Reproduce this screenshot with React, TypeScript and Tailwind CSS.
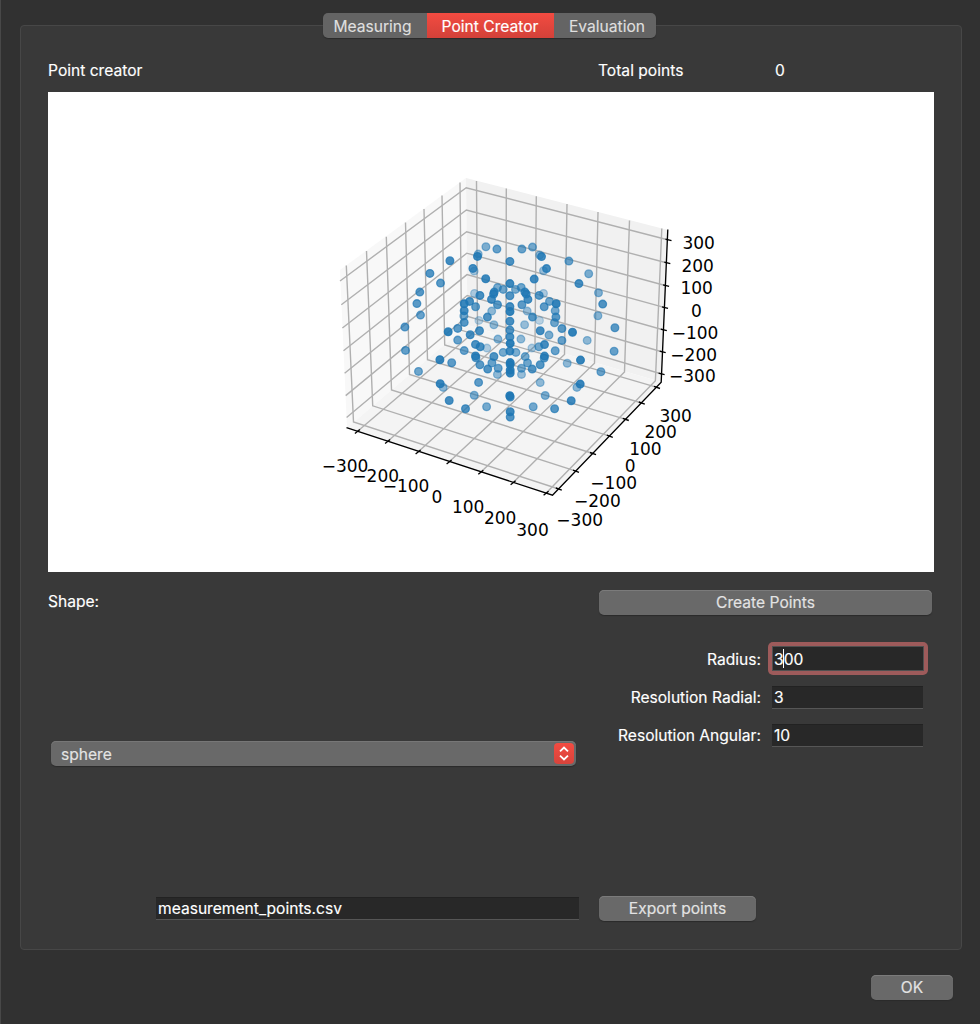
import React from "react";

type P = [number, number];

const leftTop: P[] = [[346.3, 265.5], [366.5, 251], [386.3, 236.7], [405.5, 222.5], [424, 209], [442, 195.5], [460, 182.5]];
const leftBottom: P[] = [[353.5, 422], [372.7, 405.8], [391.5, 390], [409.5, 374.5], [427.5, 359.7], [444.7, 345], [461.5, 330.3]];
const yTicks: P[] = [[558.8, 489], [576, 471.2], [593, 453.5], [609.8, 436.2], [625.8, 419.3], [641.8, 403], [657, 387.3]];
const backTop: P[] = [[476.5, 181], [506.3, 188.5], [536.3, 196.3], [567, 204], [598, 212], [629.5, 220.5], [661.8, 228.5]];
const backBottom: P[] = [[477.5, 329.3], [506, 337.7], [535, 346], [564.5, 354.5], [594.5, 363.2], [624.5, 372], [655.4, 380.8]];
const xTicks: P[] = [[357.3, 431.5], [387.5, 441.5], [418, 452], [449, 462], [480.7, 472.3], [513, 482.7], [546, 493.3]];
const zLeft: P[] = [[340, 281], [341.3, 304.7], [342.4, 328], [343.5, 350.8], [344.6, 373.2], [345.7, 395.6], [346.6, 417.5]];
const zCorner: P[] = [[466.2, 187.7], [466.4, 210], [466.6, 231.7], [466.8, 253.2], [467, 274.6], [467.2, 295.5], [467.4, 316.3]];
const zTicks: P[] = [[668.5, 240], [667.3, 263], [666.1, 285.7], [665, 307.7], [663.8, 330], [662.7, 352], [661.6, 374]];

const labels: [string, number, number][] = [
  ["−300", 345.3, 465.7], ["−200", 376, 476], ["−100", 406.3, 486.2], ["0", 437.3, 496.7], ["100", 468.5, 507], ["200", 500.5, 518.3], ["300", 532.8, 529.5],
  ["−300", 580, 519.7], ["−200", 597.7, 501.3], ["−100", 614, 483.3], ["0", 630.5, 466], ["100", 645.7, 449], ["200", 661, 432.3], ["300", 676, 416.3],
  ["300", 699, 243], ["200", 698, 266.3], ["100", 697, 288.3], ["0", 696.7, 310.7], ["−100", 695.3, 333], ["−200", 694, 354.7], ["−300", 692.7, 376],
];

const dots: [number, number, number][] = [
  [485.7, 246.7, 0.58], [496.7, 249, 0.7], [478, 254, 0.5], [477.3, 256.3, 0.9], [449.7, 260.7, 0.88], [474, 271, 0.4], [472.7, 268.3, 0.85],
  [429.7, 273.3, 0.8], [440.3, 283, 0.76], [485.5, 278.7, 0.9], [419.6, 292, 0.78], [416.7, 303.5, 0.76], [420.3, 315, 0.7], [404.7, 327, 0.74],
  [405.3, 350.3, 0.72], [448, 331.7, 0.95],
  [521.7, 249, 0.68], [532.3, 247, 0.62], [539.5, 255, 0.5], [541.3, 256.5, 0.85], [509.7, 261.3, 0.82], [568.7, 261, 0.68], [543.3, 270.7, 0.45],
  [546.3, 268.5, 0.85], [588.5, 273.7, 0.6], [534, 279, 0.88], [578.7, 283.5, 0.85], [598.3, 292.7, 0.56], [602.5, 304, 0.8], [597.7, 315.7, 0.54],
  [614.7, 327.7, 0.76], [613.9, 351.2, 0.7], [572.3, 332.2, 0.95], [587, 340.3, 0.5],
  [509.7, 283.5, 0.9], [509.7, 295.6, 0.8], [509.7, 306.5, 0.85], [509.8, 311.5, 0.95], [509.7, 321.2, 0.85], [509.7, 330, 0.8], [509.7, 336.8, 0.85],
  [510, 343.3, 0.97], [509.7, 351, 0.88], [510, 362.5, 0.95], [510, 364.5, 0.9], [510, 370, 0.95], [510, 373, 0.95], [509.6, 395.6, 0.95], [510, 397, 0.8],
  [510, 411.7, 0.9], [510, 417, 0.8],
  [474.3, 293.3, 0.35], [479.7, 295.3, 0.84], [497.3, 287.5, 0.6], [503, 289.3, 0.65], [515.3, 289.3, 0.6], [521, 287.3, 0.65],
  [494, 292, 0.8], [493.4, 294, 0.85], [491.3, 299.3, 0.85], [497.3, 304.6, 0.76], [491.5, 311, 0.5], [524.7, 292, 0.8], [526, 294, 0.85],
  [527.7, 299.3, 0.85], [521.7, 304.6, 0.74], [527, 311, 0.45], [539, 295.3, 0.76], [543.3, 293.3, 0.35], [469.4, 301.3, 0.84], [475.4, 306.6, 0.72],
  [464, 303.6, 0.92], [464, 310.7, 0.86], [463.7, 315.8, 0.65], [464, 322.3, 0.78], [457.5, 328.3, 0.75], [470, 334.7, 0.85], [479.3, 330.6, 0.84],
  [457.5, 340, 0.7], [487.2, 317, 0.8], [478.7, 320.3, 0.28], [493.7, 324.7, 0.48], [524.4, 324.7, 0.45], [532.3, 317, 0.78], [539.3, 320.3, 0.28],
  [549.3, 301.3, 0.65], [544, 306.6, 0.74], [556, 303.7, 0.94], [555, 310.7, 0.64], [555.7, 317, 0.76], [554.3, 322.6, 0.66], [561.7, 328.5, 0.76],
  [540, 330.7, 0.86], [548.8, 335, 0.6], [561.7, 340.3, 0.7], [497.7, 339, 0.52], [520.7, 339, 0.48], [464, 350.5, 0.7], [475.3, 344.3, 0.82],
  [480, 346.7, 0.84], [486.7, 348, 0.35], [531.7, 348, 0.35], [538.7, 346.7, 0.65], [544.3, 344.5, 0.86], [555, 350.7, 0.7], [503, 352.3, 0.62],
  [515.7, 352.3, 0.6], [475.3, 355.8, 0.85], [475.7, 357.6, 0.75], [493.7, 356.4, 0.82], [491.7, 362.8, 0.7], [479.7, 364.7, 0.76], [487.5, 369, 0.8],
  [498, 368.2, 0.7], [497.2, 374.3, 0.5], [525, 356.5, 0.62], [527.3, 362.8, 0.66], [521.3, 368.2, 0.62], [521.3, 374.3, 0.46], [532, 369, 0.8],
  [540, 364.7, 0.78], [544.3, 356, 0.84], [544, 358, 0.72], [451.5, 362.7, 0.74], [567, 363.2, 0.5], [439.7, 359.6, 0.94], [478.4, 382.3, 0.74],
  [540, 382.5, 0.5], [474, 395.2, 0.6], [545, 395.4, 0.6], [418.3, 371.3, 0.66], [443, 387.3, 0.52], [440, 383.7, 0.92], [449, 400.4, 0.86],
  [465.3, 408.6, 0.8], [486.4, 406.7, 0.62], [580.3, 360, 0.94], [600.7, 371.7, 0.68], [576.7, 387.3, 0.52], [580, 384, 0.92], [571, 400.7, 0.88],
  [554.4, 408.7, 0.78], [533, 406.7, 0.64],
];

const path = (...points: P[]) => "M" + points.map((p) => p.join(",")).join("L");

function ScatterPlot() {
  return (
    <svg viewBox="48 92 886 479.5" className="block h-[479.5px] w-[886px] bg-white">
      <path d="M466,178L340,270L347,428L467.5,325Z" fill="#f8f8f8" />
      <path d="M466,178L668,230L661,382L467.5,325Z" fill="#f1f1f1" />
      <path d="M347,428L553,495L661,382L467.5,325Z" fill="#f4f4f4" />
      <g fill="none" stroke="#b0b0b0" strokeWidth="1.4">
        {leftTop.map((p, i) => <path key={i} d={path(p, leftBottom[i], yTicks[i])} />)}
        {backTop.map((p, i) => <path key={i} d={path(p, backBottom[i], xTicks[i])} />)}
        {zLeft.map((p, i) => <path key={i} d={path(p, zCorner[i], zTicks[i])} />)}
      </g>
      <g fill="none" stroke="#000" strokeWidth="1.35">
        <path d="M346.5,427.7L552.5,495.2L661.2,382.2L667.8,229.5" />
        {xTicks.map(([x, y], i) => <path key={i} d={path([x - 2.4, y + 2], [x + 2.6, y - 2])} />)}
        {yTicks.map(([x, y], i) => <path key={i} d={path([x - 3, y - 1], [x + 3, y + 1.2])} />)}
        {zTicks.map(([x, y], i) => <path key={i} d={path([x - 3, y - 0.9], [x + 3, y + 0.7])} />)}
      </g>
      <g fill="#1f77b4" stroke="#1f77b4" strokeWidth="1.3">
        {dots.map(([x, y, o], i) => <circle key={i} cx={x + 0.2} cy={y + 0.1} r="3.85" fillOpacity={o * 0.96} strokeOpacity={o * 0.9} />)}
      </g>
      <g fill="#000" textAnchor="middle" className="font-['DejaVu_Sans',sans-serif] text-[17px]">
        {labels.map(([t, x, y], i) => <text key={i} x={x - 0.3} y={y + 6.1}>{t}</text>)}
      </g>
    </svg>
  );
}

function Button({ className, children }: { className: string; children: React.ReactNode }) {
  return (
    <button className={"flex h-[25px] items-center justify-center rounded-[5px] bg-[#696969] pt-px text-[#e3e3e3] shadow-[inset_0_1px_0_#7b7b7b,0_1px_1px_#2b2b2b] " + className}>
      {children}
    </button>
  );
}

const field = "flex items-center border-b border-[#565656] bg-[#282828] pt-0.5 shadow-[inset_0_1px_0_#222]";

export default function App() {
  return (
    <div className="flex h-[1024px] w-[980px] flex-col border-l border-[#484848] bg-[#313131] pl-[19px] pt-[25px] font-['Inter','Liberation_Sans',sans-serif] text-[15.6px] leading-5 text-white [-webkit-text-stroke:0.15px]">
      <main className="flex h-[925px] w-[942px] flex-col rounded-[4px] border border-[#474747] bg-[#393939] px-[27px]">
        <nav className="-mt-[13px] ml-[275px] flex h-[25px] w-[333px] overflow-hidden rounded-[5px] bg-[#646464] text-[#dfdfdf] shadow-[0_1px_1px_#2b2b2b]">
          <button className="w-[104px] pr-[5px] pt-[3px]">Measuring</button>
          <button className="w-[127px] bg-gradient-to-b from-[#f34b41] to-[#d34139] pt-[3px] pr-px text-white">Point Creator</button>
          <button className="w-[102px] pl-1 pt-[3px]">Evaluation</button>
        </nav>
        <header className="mt-[23px] flex h-5 items-center">
          <span className="w-[550px]">Point creator</span>
          <span className="w-[177px]">Total points</span>
          <span>0</span>
        </header>
        <section className="mt-[11px] h-[480px] [-webkit-text-stroke:0px]">
          <ScatterPlot />
        </section>
        <section className="mt-[18px] flex h-[290px]">
          <div className="w-[551px]">
            <div className="h-[151px] pt-0.5">Shape:</div>
            <div className="ml-[3px] flex h-[25px] w-[525px] items-center justify-between rounded-[5px] bg-[#696969] pl-2.5 pr-0.5 text-[#e3e3e3] shadow-[inset_0_1px_0_#777,0_1px_1px_#2b2b2b]">
              <span className="pt-0.5">sphere</span>
              <span className="flex h-[21px] w-5 items-center justify-center rounded-[4px] bg-gradient-to-b from-[#f34b41] to-[#d8433b]">
                <svg viewBox="0 0 20 21" className="h-[21px] w-5" fill="none" stroke="#fff" strokeWidth="1.8">
                  <path d="M6 8.4L10 4.6L14 8.4M6 12.6L10 16.4L14 12.6" />
                </svg>
              </span>
            </div>
          </div>
          <div className="w-[334px]">
            <Button className="w-[333px]">Create Points</Button>
            <div className="mt-[27px] flex h-[33px] items-center">
              <label className="w-[162px] pt-0.5 text-right">Radius:</label>
              <div className="ml-[7px] flex h-[33px] w-[160px] rounded-[5px] bg-[#9e5b5b] p-1">
                <div className="flex w-full items-center border border-[#505050] bg-[#282828] pl-px pt-0.5">
                  3<span className="-mx-[0.5px] -mt-0.5 h-[19px] w-px bg-white" />00
                </div>
              </div>
            </div>
            <div className="mt-[11px] flex h-[23px] items-center">
              <label className="w-[162px] pt-px text-right">Resolution Radial:</label>
              <div className={"ml-[11px] h-[23px] w-[151px] pl-0.5 " + field}>3</div>
            </div>
            <div className="mt-[15px] flex h-[23px] items-center">
              <label className="w-[162px] pt-px text-right">Resolution Angular:</label>
              <div className={"ml-[11px] h-[23px] w-[151px] pl-0.5 " + field}>10</div>
            </div>
          </div>
        </section>
        <footer className="mt-[16px] flex items-center">
          <div className={"ml-[108px] mr-5 h-[23px] w-[423px] pl-0.5 " + field}>measurement_points.csv</div>
          <Button className="w-[157px]">Export points</Button>
        </footer>
      </main>
      <div className="mt-[25px] flex justify-end pr-[27px]">
        <Button className="w-[82px]">OK</Button>
      </div>
    </div>
  );
}
